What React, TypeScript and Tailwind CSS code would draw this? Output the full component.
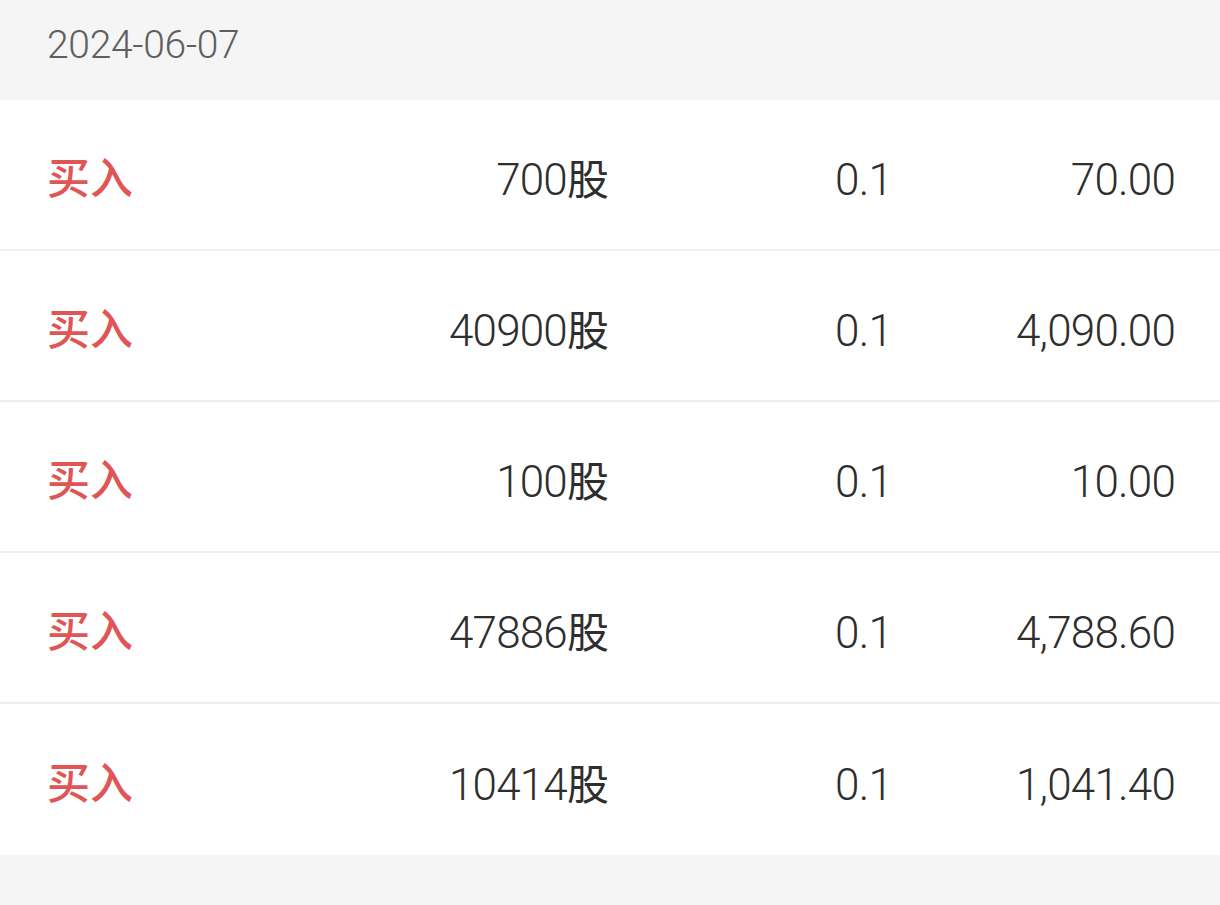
const rows = [
  { qty: "700", price: "0.1", amount: "70.00" },
  { qty: "40900", price: "0.1", amount: "4,090.00" },
  { qty: "100", price: "0.1", amount: "10.00" },
  { qty: "47886", price: "0.1", amount: "4,788.60" },
  { qty: "10414", price: "0.1", amount: "1,041.40" },
];

const font = { fontFamily: 'Roboto, "Noto Sans CJK SC", sans-serif' };

export default function App() {
  return (
    <div className="min-h-[905px] bg-[#f5f5f6]" style={font}>
      <div className="h-[100px] flex items-center px-[47px] pb-[10px]">
        <span className="text-[39px] font-light text-[#5f5f5f] tracking-[-0.3px]">2024-06-07</span>
      </div>
      <div className="bg-white">
        {rows.map((r, i) => (
          <div
            key={i}
            className={`h-[151px] flex items-center pl-[47px] pr-[45px] pt-[10px] text-[44px] font-light text-[#2e2e2e] tracking-[-0.8px] ${
              i < rows.length - 1 ? "border-b-2 border-[#efefef]" : ""
            }`}
          >
            <div className="w-[300px] text-[#e05555] text-[43px] font-medium tracking-normal">买入</div>
            <div className="w-[262px] text-right">
              {r.qty}
              <span className="tracking-normal font-normal text-[42px]">股</span>
            </div>
            <div className="w-[283px] text-right">{r.price}</div>
            <div className="flex-1 text-right">{r.amount}</div>
          </div>
        ))}
      </div>
    </div>
  );
}
